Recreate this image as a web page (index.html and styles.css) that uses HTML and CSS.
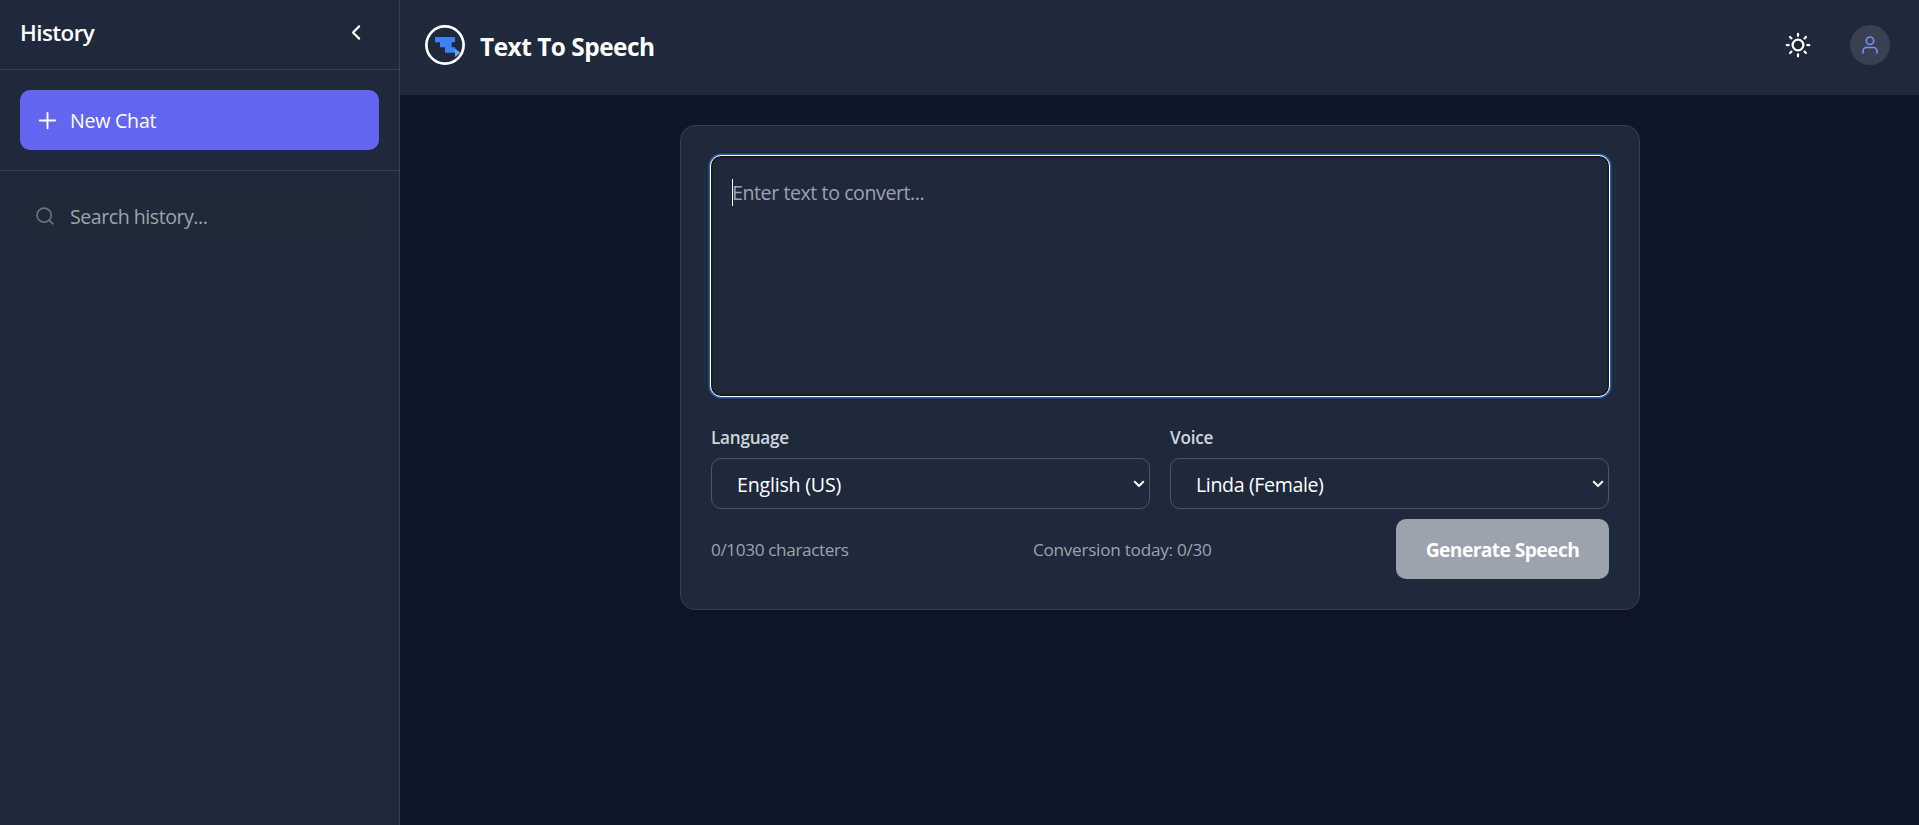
FILE: index.html
```html
<!DOCTYPE html>
<html lang="en">
<head>
<meta charset="utf-8">
<title>Text To Speech</title>
<link rel="stylesheet" href="styles.css">
</head>
<body>
<div class="app">
  <aside class="sidebar">
    <div class="side-head">
      <h2 class="side-title"><span>History</span></h2>
      <svg class="chevron" viewBox="0 0 24 24"><path d="M15 19l-7-7 7-7"/></svg>
    </div>
    <div class="side-new">
      <button class="new-chat">
        <svg class="plus" viewBox="0 0 24 24"><path d="M12 4v16m8-8H4"/></svg>
        <span>New Chat</span>
      </button>
    </div>
    <div class="side-search">
      <div class="search">
        <svg class="magnifier" viewBox="0 0 24 24"><circle cx="11" cy="11" r="8.500"/><path d="M21.500 21.500l-4.500-4.500"/></svg>
        <span>Search history...</span>
      </div>
    </div>
  </aside>
  <div class="content">
    <header class="topbar">
      <div class="brand">
        <svg class="logo" viewBox="0 0 40 40">
          <circle cx="20" cy="20" r="18.6" fill="none" stroke="#fff" stroke-width="2.7"/>
          <path d="M10 12h20v5.300h-3.300v5H30v5.400H20v-5.400h-5v-5h-5z" fill="#3b82f6"/>
          <path d="M30 23.500l5.300 4.300-5.300 4.300z" fill="#60a5fa"/>
        </svg>
        <h1 class="brand-name"><span>Text To Speech</span></h1>
      </div>
      <div class="actions">
        <svg class="sun" viewBox="0 0 24 24"><circle cx="12" cy="12" r="4.300"/><path d="M12 3v1.600m0 14.800V21m9-9h-1.600M4.600 12H3m15.364 6.364l-1.100-1.100M6.736 6.736l-1.100-1.100m12.728 0l-1.100 1.100M6.736 17.264l-1.100 1.100"/></svg>
        <div class="avatar"><svg viewBox="0 0 20 20"><circle cx="10" cy="5.700" r="3.700"/><path d="M3 18v-2a3.500 3.500 0 013.500-3.500h7A3.500 3.500 0 0117 16v2"/></svg></div>
      </div>
    </header>
    <main class="main">
      <section class="card">
        <div class="editor"><i class="caret"></i><span>Enter text to convert...</span></div>
        <div class="fields">
          <div class="field">
            <label class="label"><span>Language</span></label>
            <div class="select"><span class="lang">English (US)</span><svg class="arrow" viewBox="0 0 12 8"><path d="M1.200 1.200L6 6l4.800-4.800"/></svg></div>
          </div>
          <div class="field">
            <label class="label"><span>Voice</span></label>
            <div class="select"><span class="voice">Linda (Female)</span><svg class="arrow" viewBox="0 0 12 8"><path d="M1.200 1.200L6 6l4.800-4.800"/></svg></div>
          </div>
        </div>
        <div class="footer">
          <span class="count">0/1030 characters</span>
          <span class="today">Conversion today: 0/30</span>
          <button class="generate"><span>Generate Speech</span></button>
        </div>
      </section>
    </main>
  </div>
</div>
</body>
</html>
```
FILE: styles.css
```css
* { box-sizing: border-box; }
body { margin: 0; background: #0f172a; color: #fff; font-family: "Open Sans", "Noto Sans", sans-serif; font-size: 19.6px; }
h1, h2 { margin: 0; }
button { border: 0; font-family: inherit; color: #fff; }
svg { display: block; flex: none; fill: none; stroke-linecap: round; stroke-linejoin: round; }
span { white-space: nowrap; }
.app { display: flex; height: 825px; overflow: hidden; }
.sidebar { width: 400px; flex: none; background: #1e293b; border-right: 1px solid #374151; }
.side-head { height: 70px; padding: 0 32px 4px 20px; display: flex; align-items: center; justify-content: space-between; border-bottom: 1px solid #374151; }
.side-title { font-size: 22.4px; font-weight: 600; letter-spacing: -0.55px; }
.chevron { width: 21px; height: 21px; stroke: #fff; stroke-width: 2.5; }
.side-new { height: 101px; padding: 20px; border-bottom: 1px solid #374151; }
.new-chat { width: 100%; height: 60px; padding: 0 16px; display: flex; align-items: center; gap: 11px; background: #6366f1; border-radius: 10px; font-size: 19.6px; letter-spacing: -0.25px; }
.plus { width: 23px; height: 23px; stroke: #fff; stroke-width: 2; }
.side-search { padding: 20px; }
.search { height: 50px; padding: 0 15px; display: flex; align-items: center; gap: 15px; background: #1f2937; border-radius: 10px; color: #9ca3af; letter-spacing: -0.48px; }
.search span { padding-top: 1px; }
.magnifier { width: 20px; height: 20px; stroke: #6b7280; stroke-width: 2; }
.content { flex: 1; min-width: 0; }
.topbar { height: 95px; padding: 0 29px 5px 25px; display: flex; align-items: center; justify-content: space-between; background: #1e293b; }
.brand, .actions { display: flex; align-items: center; }
.brand { gap: 15px; }
.logo { width: 40px; height: 40px; }
.brand-name { padding-top: 2px; font-size: 24.4px; font-weight: 700; letter-spacing: -0.48px; }
.actions { gap: 37.5px; }
.sun { width: 30px; height: 30px; stroke: #fff; stroke-width: 1.8; }
.avatar { width: 40px; height: 40px; border-radius: 50%; background: #374151; display: flex; align-items: center; justify-content: center; }
.avatar svg { width: 20px; height: 20px; stroke: #818cf8; stroke-width: 1.6; }
.main { display: flex; justify-content: center; padding: 30px 0 0 1px; }
.card { width: 960px; height: 485px; padding: 29px 30px 30px; background: #1e293b; border: 1px solid #374151; border-radius: 15px; box-shadow: 0 5px 10px rgba(0,0,0,.15); }
.editor { height: 242px; margin: 0 -1px; padding: 20px 21px; border-radius: 11px; background: #1e293b; border: 1px solid #fff; box-shadow: 0 0 0 1.5px #2b5cab, inset 0 0 0 2px #1a1d22; color: #9ca3af; display: flex; align-items: flex-start; line-height: 34px; letter-spacing: -0.43px; }
.editor span { margin-left: -1px; }
.caret { width: 1px; height: 27px; background: #fff; margin-top: 3px; }
.fields { display: grid; grid-template-columns: 1fr 1fr; gap: 20px; margin-top: 27px; }
.label { display: block; height: 34px; line-height: 27px; font-size: 17.15px; font-weight: 600; letter-spacing: -0.25px; color: #d1d5db; }
.select { height: 51px; padding: 0 4px 0 25px; display: flex; align-items: center; justify-content: space-between; border: 1px solid #4b5563; border-radius: 10px; }
.select span { padding-top: 1px; }
.lang { letter-spacing: -0.2px; }
.voice { letter-spacing: -0.38px; }
.arrow { width: 12px; height: 8px; stroke: #fff; stroke-width: 2; stroke-linecap: butt; }
.footer { margin-top: 10px; height: 60px; display: flex; align-items: center; justify-content: space-between; color: #9ca3af; font-size: 17.15px; }
.count, .today { padding-top: 1px; }
.count { letter-spacing: -0.36px; }
.today { letter-spacing: -0.25px; }
.generate { width: 213px; height: 60px; padding: 0; border-radius: 10px; background: #9ca3af; font-size: 19.3px; font-weight: 700; letter-spacing: -0.62px; }
```
